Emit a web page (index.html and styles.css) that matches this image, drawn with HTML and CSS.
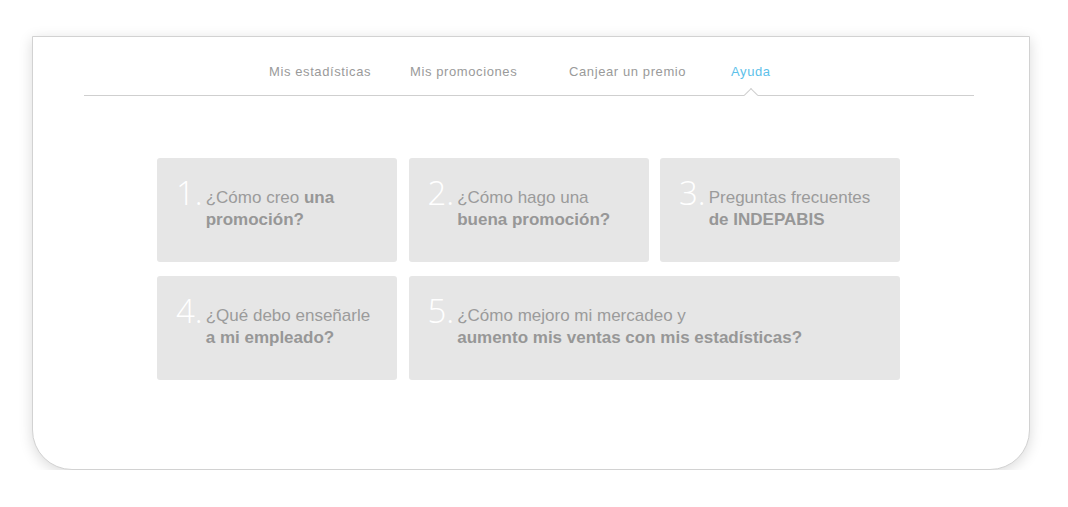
FILE: index.html
```html
<!DOCTYPE html>
<html lang="es">
<head>
<meta charset="utf-8">
<title>Ayuda</title>
<link rel="stylesheet" href="styles.css">
</head>
<body>
<div class="card">
  <nav class="nav">
    <ul class="nav-list">
      <li class="nav-item">Mis estadísticas</li>
      <li class="nav-item">Mis promociones</li>
      <li class="nav-item">Canjear un premio</li>
      <li class="nav-item active">Ayuda</li>
    </ul>
  </nav>
  <div class="tiles">
    <div class="tile">
      <span class="num">1.</span>
      <p class="q">¿Cómo creo <b>una</b><br><b>promoción?</b></p>
    </div>
    <div class="tile">
      <span class="num">2.</span>
      <p class="q">¿Cómo hago una<br><b>buena promoción?</b></p>
    </div>
    <div class="tile">
      <span class="num">3.</span>
      <p class="q">Preguntas frecuentes<br><b>de INDEPABIS</b></p>
    </div>
    <div class="tile">
      <span class="num">4.</span>
      <p class="q">¿Qué debo enseñarle<br><b>a mi empleado?</b></p>
    </div>
    <div class="tile wide">
      <span class="num">5.</span>
      <p class="q">¿Cómo mejoro mi mercadeo y<br><b>aumento mis ventas con mis estadísticas?</b></p>
    </div>
  </div>
</div>
</body>
</html>
```
FILE: styles.css
```css
* { box-sizing: border-box; }
html, body { margin: 0; padding: 0; background: #fff; }
body {
  padding: 36px 0 0 32px;
  font-family: "Liberation Sans", Arial, Helvetica, sans-serif;
}
.card {
  width: 998px;
  height: 434px;
  border: 1px solid #d2d2d2;
  border-radius: 0 0 40px 40px;
  background: #fff;
  box-shadow: 0 3px 14px rgba(0, 0, 0, 0.15);
}
.nav {
  margin: 0 55px 0 51px;
  border-bottom: 1px solid #cfcfcf;
  position: relative;
}
.nav-list {
  list-style: none;
  margin: 0;
  padding: 27px 0 15px 185px;
  display: grid;
  grid-template-columns: 141px 159px 162px auto;
}
.nav-item {
  font-size: 13px;
  line-height: 16px;
  letter-spacing: 0.6px;
  color: #9a9a9a;
  position: relative;
}
.nav-item.active { color: #5cc1ea; }
.nav-item.active::after {
  content: "";
  position: absolute;
  left: 15px;
  bottom: -20px;
  width: 9px;
  height: 9px;
  background: #fff;
  border-top: 1px solid #cfcfcf;
  border-left: 1px solid #cfcfcf;
  transform: rotate(45deg);
}
.tiles {
  margin: 62px 0 0 124px;
  display: grid;
  grid-template-columns: 240px 240px 240px;
  grid-auto-rows: 104px;
  column-gap: 11.5px;
  row-gap: 14px;
}
.tile {
  background: #e6e6e6;
  border-radius: 3px;
  display: flex;
  align-items: flex-start;
  padding: 19px 10px 0 19px;
}
.tile.wide { grid-column: span 2; }
.num {
  font-family: "Open Sans", "Liberation Sans", sans-serif;
  font-weight: 300;
  font-size: 33px;
  line-height: 32px;
  color: #fff;
  margin-right: 3px;
}
.q {
  margin: 10px 0 0;
  font-size: 17px;
  line-height: 22px;
  color: #9b9b9b;
  letter-spacing: 0;
}
.q b { font-weight: 700; color: #979797; }
```
